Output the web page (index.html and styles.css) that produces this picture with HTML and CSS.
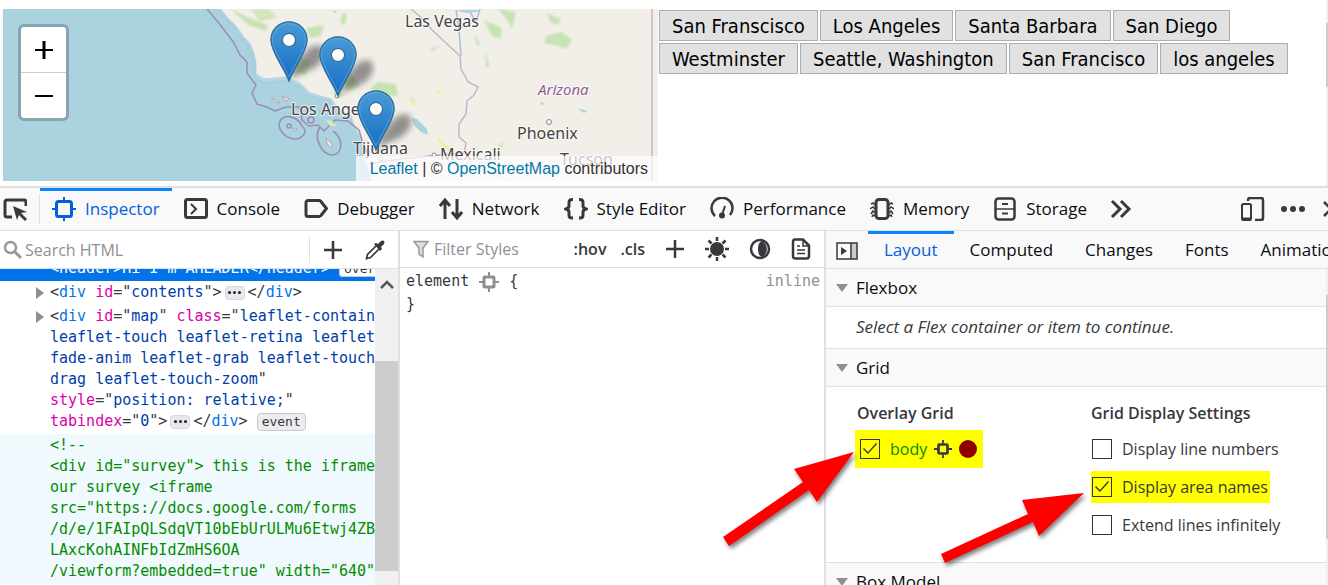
FILE: index.html
```html
<!DOCTYPE html>
<html lang="en">
<head>
<meta charset="utf-8">
<title>Grid inspector</title>
<link rel="stylesheet" href="styles.css">
</head>
<body>
<svg class="defs" aria-hidden="true">
  <defs>
    <linearGradient id="pin-fill" x1="0" y1="0" x2="0" y2="1"><stop offset="0" stop-color="#4a9bd6"/><stop offset="1" stop-color="#146cc4"/></linearGradient>
    <filter id="soft"><feGaussianBlur stdDeviation="3"/></filter>
    <filter id="haze"><feGaussianBlur stdDeviation="1"/></filter>
    <symbol id="pin" viewBox="0 0 64 64" overflow="visible">
      <path d="M19 58 C25 44 34 26 47 24 C58 25 56 39 44 47 Z" fill="#333" opacity=".5" filter="url(#soft)"/>
      <path d="M19 60 C14 47 1 31 .8 19 A18.2 18.2 0 0 1 37.200 19 C37 31 24 47 19 60Z" fill="url(#pin-fill)" stroke="#2e6c97" stroke-width="1.200"/>
      <path d="M19 56 C14 44 3 30 2.500 19 A16.500 16.500 0 0 1 35.500 19 C35 30 24 44 19 56Z" fill="none" stroke="#6db3e2" stroke-opacity=".6"/>
      <circle cx="19" cy="19" r="6.600" fill="#fff" stroke="#2e6c97" stroke-width="1.200"/>
    </symbol>
    <symbol id="grid-node" viewBox="0 0 20 20"><g fill="none" stroke="currentColor"><rect x="5" y="5" width="10" height="10" rx="1" stroke-width="3"/><path d="M10 0v4M10 16v4M0 10h4M16 10h4" stroke-width="2"/></g></symbol>
  </defs>
</svg>

<main class="page">
  <section class="map" aria-label="Map">
    <svg class="tiles" viewBox="3 9 655 172" preserveAspectRatio="xMinYMin slice">
      <rect x="3" y="9" width="655" height="172" fill="#aad3df"/>
      <path d="M220 9 228 19 236 27 242 37 249 43 254 53 256 62 256 76 264 82 285 80 299 85 308 94 320 98 330 99 337 111 352 119 360 137 364 156 372 181H658V9Z" fill="#f2efe9"/>
      <g filter="url(#haze)" fill="#c8e2b3">
        <path d="M231 9 250 18 268 25 266 31 248 25ZM306 28 324 25 321 36 310 38ZM370 88 378 82 396 84 398 96 382 96ZM341 76 350 73 360 86 349 91ZM342 14 347 14 345 25 340 23ZM498 9 508 21 512 29 516 12ZM547 13 561 19 558 25 550 22ZM546 36 561 32 572 39 567 49 555 45 544 43ZM474 34 480 43 477 46ZM485 50 490 67 486 67ZM428 49 440 46 433 51ZM484 20 502 28 501 39 492 36Z"/>
        <path d="M250 9 268 9 278 18 260 21ZM290 52 310 62 306 76 292 72ZM410 97 415 99 413 105ZM498 145 505 142 500 150Z" opacity=".8"/>
        <path d="M330 90 344 94 340 98Z"/>
      </g>
      <g fill="#aad3df"><path d="M412 118 417 119 427 129 428 135 421 132 414 125ZM577 108 587 111 584 113ZM541 102 545 104 541 105ZM334 10 337 12 334 13ZM455 10 480 10 476 12 466 13 462 12Z"/></g>
      <g fill="none" stroke="#a6cde0" stroke-width="5" stroke-linejoin="round" opacity=".75"><path d="M218 9 227 20 235 28 242 38 248 44 252 54 254 63 254 75 264 81 285 79 299 85 308 94 320 98 330 101 337 111 352 119"/></g>
      <g fill="none" stroke="#9b8fb5" stroke-width="1.600" stroke-linejoin="round">
        <path d="M207 9 218 22 228 35 234 43 240 55 247 62 247 73 256 85 252 93 257 104 267 107 275 111 286 107 300 107 302 120 309 126 318 125 324 131 335 120 348 121 359 130 363 144 369 156"/>
        <path d="M302 126C298 117 285 113 280 121C276 132 290 142 300 138C305 135 307 130 302 126Z"/><path d="M320 127C313 137 321 154 332 155C344 154 343 138 333 131"/>
        <circle cx="289" cy="126" r="2"/><circle cx="311" cy="120" r="3"/>
      </g>
      <g fill="#f2e6df" stroke="#b9a4bd"><path d="M271 98 276 100 280 103 275 102ZM282 96 290 99 286 101ZM292 128 298 129 295 131ZM326 138 332 144 332 148 327 144Z"/></g>
      <path d="M326 120 332 121 337 126 330 126Z" fill="#dbeab1"/>
      <g fill="none" stroke="#cbb1cd" stroke-width="1.500"><path d="M411 9 424 20 432 30 460 56M460 56 461 69 465 76 468 82 478 87 474 95 467 101 466 114 459 124 459 137 466 143 465 149 462 156"/><path d="M369 164 400 159 430 156 462 153" stroke="#c09dbe"/><path d="M652 9V181"/><path d="M480 169 510 181" stroke="#e3cfe4"/></g>
      <path d="M456 10 459 29 461 56M470 12 476 22 480 9" fill="none" stroke="#a8bcdc" stroke-width="1.500"/>
      <path d="M438 139 450 150M439 89 437 94M412 100 414 105" fill="none" stroke="#fbe9a8" stroke-width="3"/>
      <g fill="#fff" stroke="#888"><circle cx="337" cy="96" r="2"/><circle cx="549" cy="122" r="2.500"/><circle cx="434" cy="155" r="2"/><circle cx="381" cy="159" r="2"/></g>
      <g class="places"><text x="405" y="27">Las Vegas</text><text x="291" y="115">Los Angeles</text><text x="517" y="139">Phoenix</text><text x="353" y="154">Tijuana</text><text x="440" y="160">Mexicali</text><text x="560" y="165">Tucson</text><text x="538" y="95" class="state">Arizona</text></g>
      <use href="#pin" x="270" y="21" width="64" height="64"/>
      <use href="#pin" x="319" y="36" width="64" height="64"/>
      <use href="#pin" x="357" y="90" width="64" height="64"/>
    </svg>
    <div class="zoom">
      <button aria-label="Zoom in"><svg width="20" height="20"><path d="M1 9h18v2H1zM8.500 1h3v18h-3z"/></svg></button>
      <button aria-label="Zoom out"><svg width="20" height="20"><path d="M1 9h18v2H1z"/></svg></button>
    </div>
    <div class="credit"><a href="#">Leaflet</a> | © <a href="#">OpenStreetMap</a> contributors</div>
  </section>
  <section class="cities">
    <div><button>San Franscisco</button><button>Los Angeles</button><button>Santa Barbara</button><button>San Diego</button></div>
    <div><button>Westminster</button><button>Seattle, Washington</button><button>San Francisco</button><button>los angeles</button></div>
  </section>
  <div class="page-scroll"><i></i></div>
</main>

<section class="devtools">
  <nav class="toolbar">
    <button class="pick" aria-label="Pick element"><svg class="icon" viewBox="0 0 24 24"><path d="M9 20H4a2 2 0 0 1-2-2V5a2 2 0 0 1 2-2h17a2 2 0 0 1 2 2v4" fill="none" stroke="currentColor" stroke-width="3"/><path d="M10 9 24 15l-6 1 6 6-2 2-6-6-2 5Z"/></svg></button>
    <button class="tab active"><svg class="icon" viewBox="0 0 24 24"><g fill="none" stroke="currentColor"><rect x="4.500" y="4.500" width="15" height="15" rx="2" stroke-width="3"/><path d="M12 0v4M12 20v4M0 12h4M20 12h4" stroke-width="2"/></g></svg>Inspector</button>
    <button class="tab"><svg class="icon" viewBox="0 0 24 24"><g fill="none" stroke="currentColor"><rect x="1.500" y="2.500" width="21" height="18" rx="2" stroke-width="3"/><path d="m7 7 5 5-5 5" stroke-width="2"/></g></svg>Console</button>
    <button class="tab"><svg class="icon" viewBox="0 0 24 24"><path d="M4 3.500h11q1 0 2 1l5.500 7L17 18.500q-1 1-2 1H4a2 2 0 0 1-2-2v-12a2 2 0 0 1 2-2Z" fill="none" stroke="currentColor" stroke-width="3"/></svg>Debugger</button>
    <button class="tab"><svg class="icon" viewBox="0 0 24 24"><path d="M6 22V4M1 9l5-6 5 6M18 2v18M13 15l5 6 5-6" fill="none" stroke="currentColor" stroke-width="3"/></svg>Network</button>
    <button class="tab"><svg class="icon" viewBox="0 0 24 24"><path d="M9 2.500H8q-3 0-3 3V9q0 2-3 3 3 1 3 3v3q0 3 3 3h1M15 2.500h1q3 0 3 3V9q0 2 3 3-3 1-3 3v3q0 3-3 3h-1" fill="none" stroke="currentColor" stroke-width="3"/></svg>Style Editor</button>
    <button class="tab"><svg class="icon" viewBox="0 0 24 24"><path d="M5 19A10.500 10.500 0 1 1 20 18" fill="none" stroke="currentColor" stroke-width="2.500"/><circle cx="12" cy="18.500" r="3"/><path d="m12 18 3-9" stroke="currentColor" stroke-width="2"/></svg>Performance</button>
    <button class="tab"><svg class="icon" viewBox="0 0 24 24"><g fill="none" stroke="currentColor"><rect x="6" y="2.500" width="12" height="19" rx="3" stroke-width="3"/><path d="M5 8 3 6 1 7M5 12l-2-2-3 2M5 16l-2-2-2 3M19 8l2-2 2 1M19 12l2-2 3 2M19 16l2-2 2 3M5 19l-2-1-1 2M19 19l2-1 1 2" stroke-width="1.500"/></g></svg>Memory</button>
    <button class="tab"><svg class="icon" viewBox="0 0 24 24"><g fill="none" stroke="currentColor"><rect x="2.500" y="1.500" width="19" height="21" rx="3" stroke-width="2.500"/><path d="M2 12h20" stroke-width="1.500"/><path d="M9 7h6M9 16.500h6" stroke-width="2"/></g></svg>Storage</button>
    <button class="more" aria-label="More tools"><svg class="icon" viewBox="0 0 24 24"><path d="m3 4 8 8-8 8M12 4l8 8-8 8" fill="none" stroke="currentColor" stroke-width="3"/></svg></button>
    <span class="spacer"></span>
    <div class="tools">
      <button aria-label="Responsive mode"><svg class="icon" viewBox="0 0 24 24"><g fill="none" stroke="currentColor" stroke-width="2"><path d="M7 4V3q0-2 2-2h11q2 0 2 2v18q0 2-2 2h-6" stroke-width="2.500"/><rect x="1" y="7" width="9" height="16" rx="1.500"/><path d="M1 22h9" stroke-width="3"/></g></svg></button>
      <button aria-label="Menu"><svg class="icon" viewBox="0 0 24 24"><circle cx="3" cy="12" r="3"/><circle cx="12" cy="12" r="3"/><circle cx="21" cy="12" r="3"/></svg></button>
      <button aria-label="Close"><svg class="icon" viewBox="0 0 24 24"><path d="m3 5 14 14M17 5 3 19" stroke="currentColor" stroke-width="2.500"/></svg></button>
    </div>
  </nav>

  <div class="panels">
    <section class="markup">
      <div class="bar">
        <label class="search"><svg viewBox="0 0 20 20" width="20" height="20"><circle cx="7.500" cy="7.500" r="5.500" fill="none" stroke="#999" stroke-width="2.500"/><path d="m11 11 7 7" stroke="#999" stroke-width="3"/></svg><input type="text" placeholder="Search HTML" aria-label="Search HTML"></label>
        <div class="bar-tools">
          <button aria-label="Add node"><svg width="20" height="20"><path d="M10 1v18M1 10h18" stroke="currentColor" stroke-width="2.500"/></svg></button>
          <button aria-label="Eyedropper"><svg width="20" height="20" viewBox="0 0 20 20"><path d="M12 5 2.500 14.500 1.500 18.500 5.500 17.500 15 8" fill="none" stroke="currentColor" stroke-width="1.700"/><path d="m9 4 2-1 2 1 3-3q2-1 3 0t0 3l-3 3 1 2-2 2Z"/></svg></button>
        </div>
      </div>
      <div class="tree-wrap">
        <div class="tree">
          <div class="node selected">&lt;header&gt;Hi I'm AHEADER&lt;/header&gt; <span class="badge">overflow</span></div>
          <div class="node has-kids">&lt;<b>div</b> <em>id</em>="<i>contents</i>"&gt;<button class="dots" aria-label="Expand"></button>&lt;/<b>div</b>&gt;</div>
          <div class="node has-kids">&lt;<b>div</b> <em>id</em>="<i>map</i>" <em>class</em>="<i>leaflet-container
leaflet-touch leaflet-retina leaflet-
fade-anim leaflet-grab leaflet-touch-
drag leaflet-touch-zoom</i>"
<em>style</em>="<i>position: relative;</i>"
<em>tabindex</em>="<i>0</i>"&gt;<button class="dots" aria-label="Expand"></button>&lt;/<b>div</b>&gt; <button class="badge">event</button></div>
          <div class="node comment">&lt;!--
&lt;div id="survey"&gt; this is the iframe
our survey &lt;iframe
src="https://docs.google.com/forms
/d/e/1FAIpQLSdqVT10bEbUrULMu6Etwj4ZB
LAxcKohAINFbIdZmHS6OA
/viewform?embedded=true" width="640"</div>
        </div>
        <div class="tree-scroll"><svg width="14" height="9"><path d="m1 8 6-6 6 6" fill="none" stroke="#555" stroke-width="2.500"/></svg><i></i></div>
      </div>
    </section>

    <section class="rules">
      <div class="bar">
        <label class="filter"><svg viewBox="0 0 16 18" width="16" height="18"><path d="M1 1.500h14L10 8v9l-4-3V8Z" fill="#ddd" stroke="#999" stroke-width="1.500"/></svg><input type="text" placeholder="Filter Styles" aria-label="Filter Styles"></label>
        <button class="word">:hov</button><button class="word">.cls</button>
        <div class="rule-tools">
          <button aria-label="Add rule"><svg width="20" height="20"><path d="M10 1v18M1 10h18" stroke="currentColor" stroke-width="2.500"/></svg></button>
          <button aria-label="Light scheme"><svg width="24" height="24"><circle cx="12" cy="12" r="7"/><path d="M12 0v4M12 20v4M0 12h4M20 12h4M3.500 3.500l3 3M17.500 17.500l3 3M20.500 3.500l-3 3M6.500 17.500l-3 3" stroke="currentColor" stroke-width="2.500"/></svg></button>
          <button aria-label="Dark scheme"><svg width="22" height="22"><circle cx="11" cy="11" r="9" fill="none" stroke="currentColor" stroke-width="2.500"/><path d="M13 3a9 9 0 0 1 0 16q-4-1-4-8t4-8Z"/></svg></button>
          <button aria-label="Print media"><svg width="20" height="22"><path d="M4 1.500h8l6 6V18a2.500 2.500 0 0 1-2.500 2.500h-11A2.500 2.500 0 0 1 2 18V4q0-2.500 2-2.500Z" fill="none" stroke="currentColor" stroke-width="2.500"/><path d="M12 2v6h6M6 8h3M6 12h8M6 15.500h8" fill="none" stroke="currentColor" stroke-width="1.500"/></svg></button>
        </div>
      </div>
      <div class="rule">
        <div class="rule-head"><span>element</span><svg class="node-icon" width="20" height="20"><use href="#grid-node"/></svg><span>{</span><span class="source">inline</span></div>
        <div>}</div>
      </div>
    </section>

    <section class="side">
      <nav class="side-tabs">
        <button class="collapse" aria-label="Toggle pane"><svg width="22" height="18"><path d="M15 1h6v16h-6z" fill="#ccc"/><path d="M1 1h20v16H1zM15 1v16" fill="none" stroke="currentColor" stroke-width="1.500"/><path d="m5 5 6 4-6 4z"/></svg></button>
        <button class="active">Layout</button><button>Computed</button><button>Changes</button><button>Fonts</button><button>Animations</button>
      </nav>
      <div class="side-body">
        <div class="sections">
          <h2>Flexbox</h2>
          <p class="hint">Select a Flex container or item to continue.</p>
          <h2>Grid</h2>
          <div class="grid-info">
            <div><h3>Overlay Grid</h3>
              <div class="overlay marked"><label><input type="checkbox" checked>body</label><svg width="18" height="18"><use href="#grid-node"/></svg><button class="swatch" aria-label="Grid colour"></button></div>
            </div>
            <div><h3>Grid Display Settings</h3>
              <div class="options"><label><input type="checkbox">Display line numbers</label><label class="marked"><input type="checkbox" checked>Display area names</label><label><input type="checkbox">Extend lines infinitely</label></div>
            </div>
          </div>
          <h2>Box Model</h2>
        </div>
        <div class="side-scroll"><i></i></div>
      </div>
    </section>
  </div>
</section>
<svg class="arrows" width="1328" height="585" aria-hidden="true"><g fill="red"><path d="M723 537 803 482 794 469 854 452 817 502 809 490 729 546Z"/><path d="M941 554 1028 514 1022 500 1084 493 1039 536 1033 522 945 563Z"/></g></svg>
</body>
</html>
```
FILE: styles.css
```css
* { box-sizing: border-box; }
html, body { height: 100%; }
body { margin: 0; display: flex; flex-direction: column; overflow: hidden; position: relative; background: #fff; color: #0c0c0d; font: 16px/24px "Open Sans", "Noto Sans", sans-serif; }
button, input { font: inherit; color: inherit; margin: 0; padding: 0; }
button { border: 0; background: none; white-space: nowrap; }
button svg { display: block; fill: currentColor; }
h2, h3, p { margin: 0; font-weight: 400; }
.defs { position: absolute; width: 0; height: 0; }

.page { flex: none; display: grid; grid-template-columns: minmax(0, 655fr) minmax(0, 668fr) 2px; padding: 9px 0 5px 3px; }
.map { position: relative; height: 172px; overflow: hidden; }
.tiles { display: block; width: 100%; height: 100%; }
.places { font: 16px "Noto Sans", sans-serif; fill: #444; stroke: #fff; stroke-width: 2px; stroke-opacity: .7; paint-order: stroke; }
.places .state { font-size: 15px; font-style: italic; fill: #8d6095; }
.zoom { position: absolute; left: 15px; top: 15px; border: 3px solid #85a5af; border-radius: 6px; background: #fff; }
.zoom button { display: grid; place-items: center; width: 45px; height: 45px; color: #000; }
.zoom button + button { height: 46px; border-top: 1px solid #ccc; }
.credit { position: absolute; right: 0; bottom: 0; padding: 0 10px 0 14px; background: rgba(255,255,255,.7); color: #333; font: 16px/25px "Liberation Sans", Arial, sans-serif; white-space: nowrap; }
.credit a { color: #0078a8; text-decoration: none; }
.cities { display: grid; align-content: start; gap: 2px; padding: 1px 0 0 1px; }
.cities div { display: flex; gap: 2px; }
.cities button { height: 31px; padding: 2px 12px 0; border: 1px solid #adadad; background: #e1e1e1; color: #000; font: 20px/27px "DejaVu Sans Condensed", "Open Sans", sans-serif; }
.page-scroll { margin: -9px 0 -5px; padding-top: 23px; background: #f0f0f0; }
.page-scroll i { display: block; height: 64px; background: #cdcdcd; }

.devtools { flex: 1; min-height: 0; display: flex; flex-direction: column; border-top: 2px solid #e0e0e2; }
.toolbar { flex: none; display: flex; height: 43px; background: #f9f9fa; border-bottom: 1px solid #e0e0e2; overflow: hidden; color: #38383d; }
.icon { width: 24px; height: 24px; flex: none; }
.toolbar button { display: flex; align-items: center; }
.pick { width: 40px; padding-left: 3px; position: relative; }
.pick::after { content: ""; position: absolute; right: 0; top: 6px; bottom: 6px; border-right: 1px solid #e0e0e2; }
.toolbar .tab { gap: 9px; padding: 0 12px; border-top: 3px solid transparent; border-bottom: 3px solid transparent; flex: none; font-size: 17px; color: #0c0c0d; }
.tab .icon { color: #38383d; }
.toolbar .active, .active .icon { color: #0060df; }
.toolbar .active { border-top-color: #0a84ff; }
.more { padding-left: 10px; }
.spacer { flex: 1; }
.tools { display: flex; gap: 16px; width: 87px; overflow: hidden; }
.tools button { flex: none; }

.panels { flex: 1; min-height: 0; display: grid; grid-template-columns: minmax(0, 400fr) minmax(0, 426fr) minmax(0, 502fr); }
.panels > section { min-width: 0; min-height: 0; display: flex; flex-direction: column; }
.markup, .rules { border-right: 2px solid #e0e0e2; }
.bar { flex: none; height: 38px; display: flex; align-items: center; border-bottom: 1px solid #e0e0e2; color: #38383d; }
.search { flex: 1; display: flex; align-items: center; gap: 2px; padding-left: 3px; min-width: 0; }
.bar input { flex: 1; min-width: 0; width: 0; border: 0; background: none; outline: 0; }
.bar input::placeholder { color: #8f8f95; opacity: 1; }
.bar-tools { display: flex; align-items: center; gap: 22px; height: 26px; padding: 0 13px; border-left: 1px solid #e0e0e2; }
.tree-wrap { flex: 1; min-height: 0; display: flex; }
.tree { flex: 1; min-width: 0; overflow: hidden; font: 15px/21px "DejaVu Sans Mono", monospace; color: #38383d; }
.node { position: relative; padding: 1px 0 2px 50px; white-space: pre; }
.node b { font-weight: 400; color: #0074e8; }
.node em { font-style: normal; color: #dd00a9; }
.node i { font-style: normal; color: #003eaa; }
.selected { margin-top: -12px; background: #0074e8; color: #fff; }
.comment { background: #f0f9fe; color: #058b00; }
.has-kids::before { content: ""; position: absolute; left: 36px; top: 6px; border: 6px solid transparent; border-width: 6px 0 6px 8px; border-left-color: #8f8f8f; }
.badge { padding: 0 4px; border: 1px solid #c8c8cc; border-radius: 4px; background: #ededf0; color: #38383d; font: 13px/16px "DejaVu Sans Mono", monospace; }
.selected .badge { background: #fff; }
.dots { display: inline-grid; place-items: center; width: 20px; height: 14px; margin: 0 3px 0 3px; border: 1px solid #d7d7db; border-radius: 4px; background: #e8e8ee; vertical-align: middle; }
.dots::before { content: ""; width: 3px; height: 3px; border-radius: 50%; background: #222; box-shadow: -5px 0 #222, 5px 0 #222; }
.tree-scroll { width: 23px; display: flex; flex-direction: column; align-items: center; padding: 11px 0 14px; background: #f0f0f0; }
.tree-scroll svg { flex: none; margin-bottom: 72px; }
.tree-scroll i { flex: 1; width: 100%; background: #cdcdcd; }

.filter { flex: 1; min-width: 0; display: flex; align-items: center; gap: 5px; padding-left: 13px; }
.rules .bar { height: 37px; }
.word { margin-right: 14px; font-weight: 600; }
.rule-tools { display: flex; align-items: center; gap: 20px; padding: 0 13px 0 6px; }
.rule { padding: 2px 4px 0 6px; font: 15px/23px "DejaVu Sans Mono", monospace; color: #38383d; }
.rule-head { display: flex; align-items: center; gap: 10px; }
.node-icon { color: #8f8f8f; }
.source { margin-left: auto; color: #8f8f95; }

.side-tabs { flex: none; display: flex; height: 38px; overflow: hidden; background: #f9f9fa; border-bottom: 1px solid #e0e0e2; font-size: 17px; }
.side-tabs button { flex: none; padding: 0 16px 3px; border-top: 3px solid transparent; }
.side-tabs .collapse { width: 42px; padding: 0 10px; color: #38383d; }
.side-tabs .active { color: #0060df; border-top-color: #0a84ff; }
.side-body { flex: 1; min-height: 0; display: flex; }
.sections { flex: 1; min-width: 0; overflow: hidden; }
h2 { position: relative; padding: 6px 0 6px 30px; background: #f9f9fa; border-bottom: 1px solid #e0e0e2; font-size: 17px; line-height: 25px; }
h2::before { content: ""; position: absolute; left: 10px; top: 15px; border: 6px solid transparent; border-width: 8px 6px 0; border-top-color: #8f8f8f; }
.hint { padding: 8px 30px 9px; border-bottom: 1px solid #e0e0e2; color: #38383d; font-size: 17px; font-style: italic; }
.grid-info { display: grid; grid-template-columns: minmax(0, 235fr) minmax(0, 235fr); height: 176px; padding: 14px 0 0 30px; border-bottom: 1px solid #e0e0e2; color: #38383d; }
h3 { padding-left: 1px; font-size: 16px; line-height: 24px; font-weight: 600; }
.grid-info div + div h3 { padding-left: 0; }
.grid-info label { display: flex; align-items: center; gap: 10px; white-space: nowrap; }
.overlay { display: inline-flex; align-items: center; gap: 7px; height: 38px; margin: 5px 0 0 -1px; padding: 0 6px 0 5px; }
.overlay label { color: #058b00; }
.marked { background: #ff0; }
.swatch { width: 18px; height: 18px; border-radius: 50%; background: #900000; }
.options { display: grid; justify-items: start; gap: 6px; padding-top: 8px; }
.options label { height: 32px; padding: 0 2px 0 1px; }
input[type="checkbox"] { appearance: none; display: grid; place-items: center; width: 20px; height: 20px; border: 1px solid #333; }
input:checked::before { content: ""; width: 16px; height: 16px; background: #38383d; clip-path: polygon(1px 8px, 2px 7px, 6px 11px, 14px 2px, 15px 3px, 6px 13px); }
.side-scroll { width: 2px; padding-top: 26px; background: #f0f0f0; }
.side-scroll i { display: block; height: 244px; background: #cdcdcd; }
.arrows { position: absolute; left: 0; top: 0; pointer-events: none; filter: drop-shadow(2px 3px 2px rgba(0,0,0,.5)); }
```
